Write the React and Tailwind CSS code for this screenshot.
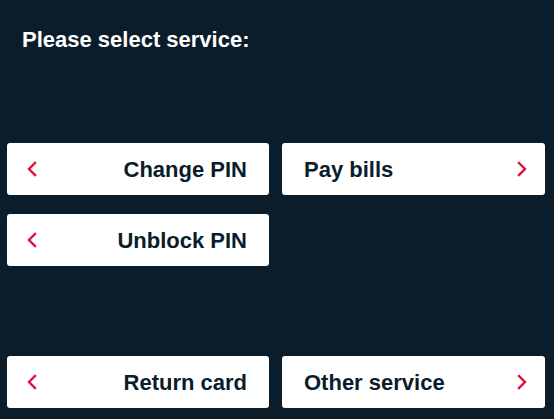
const Left = () => (
  <svg width="12" height="16" viewBox="0 0 12 16" fill="none">
    <path d="M9 2 L3 8 L9 14" stroke="#e0103a" strokeWidth="2.4" strokeLinecap="square" />
  </svg>
)

const Right = () => (
  <svg width="12" height="16" viewBox="0 0 12 16" fill="none">
    <path d="M3 2 L9 8 L3 14" stroke="#e0103a" strokeWidth="2.4" strokeLinecap="square" />
  </svg>
)

function LeftBtn({ label }) {
  return (
    <button className="h-[52px] bg-white rounded-[3px] flex items-center justify-between pl-[19px] pr-[22px] text-[#0b1c2a] text-[22px] font-bold">
      <Left />
      <span>{label}</span>
    </button>
  )
}

function RightBtn({ label }) {
  return (
    <button className="h-[52px] bg-white rounded-[3px] flex items-center justify-between pl-[22px] pr-[17px] text-[#0b1c2a] text-[22px] font-bold">
      <span>{label}</span>
      <Right />
    </button>
  )
}

export default function App() {
  return (
    <div className="w-[554px] h-[419px] bg-[#0b1c2a] overflow-hidden" style={{ fontFamily: '"Liberation Sans", Arial, sans-serif' }}>
      <h1 className="pt-[28px] pl-[22px] text-white text-[22px] font-bold leading-[24px]">Please select service:</h1>
      <div className="mt-[91px] ml-[7px] mr-[9px] grid grid-cols-[262px_263px] gap-x-[13px] gap-y-[19px]">
        <LeftBtn label="Change PIN" />
        <RightBtn label="Pay bills" />
        <LeftBtn label="Unblock PIN" />
        <div />
        <div className="h-[52px]" />
        <div />
        <LeftBtn label="Return card" />
        <RightBtn label="Other service" />
      </div>
    </div>
  )
}
